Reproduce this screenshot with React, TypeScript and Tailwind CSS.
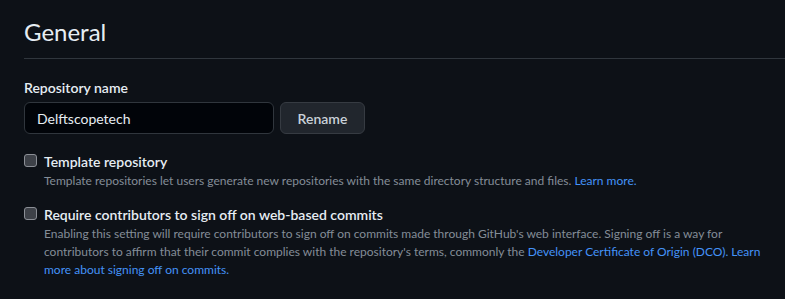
import React from "react";

function Checkbox() {
  return (
    <span className="absolute left-0 top-[3px] block h-[13px] w-[13px] rounded-[3px] border border-[#8b8f96] bg-[#3d4148]" />
  );
}

export default function App() {
  return (
    <div
      className="min-h-[299px] w-full overflow-hidden bg-[#0d1117] pl-6 pt-[14px] text-[#e6edf3]"
      style={{ fontFamily: "Lato, 'Segoe UI', 'Noto Sans', sans-serif" }}
    >
      <div className="border-b border-[#30363d] pb-2">
        <h2 className="text-[24px] font-normal leading-[36px] text-[#e6edf3]">General</h2>
      </div>

      <div className="mt-[18px]">
        <label className="block text-[14px] font-semibold leading-[21px] text-[#e6edf3]">
          Repository name
        </label>
        <div className="mt-1 flex items-center gap-[6px]">
          <div className="flex h-8 w-[250px] items-center rounded-md border border-[#30363d] bg-[#010409] px-3 text-[14px] text-[#e6edf3]">
            Delftscopetech
          </div>
          <button className="flex h-8 w-[85px] items-center justify-center rounded-md border border-[#363b42] bg-[#21262d] text-[14px] font-semibold text-[#c9d1d9]">
            Rename
          </button>
        </div>
      </div>

      <div className="relative mt-[17px] pl-5">
        <Checkbox />
        <div className="text-[14px] font-semibold leading-[21px] text-[#e6edf3]">Template repository</div>
        <p className="text-[12px] leading-[18px] text-[#848d97]">
          Template repositories let users generate new repositories with the same directory structure and files.{" "}
          <a className="text-[#4493f8]">Learn more.</a>
        </p>
      </div>

      <div className="relative mt-[14px] pl-5">
        <Checkbox />
        <div className="text-[14px] font-semibold leading-[21px] text-[#e6edf3]">
          Require contributors to sign off on web-based commits
        </div>
        <p className="text-[12px] leading-[18px] text-[#848d97]">
          Enabling this setting will require contributors to sign off on commits made through GitHub's web interface.
          Signing off is a way for contributors to affirm that their commit complies with the repository's terms,
          commonly the <a className="text-[#4493f8]">Developer Certificate of Origin (DCO).</a>{" "}
          <a className="text-[#4493f8]">Learn more about signing off on commits.</a>
        </p>
      </div>
    </div>
  );
}
